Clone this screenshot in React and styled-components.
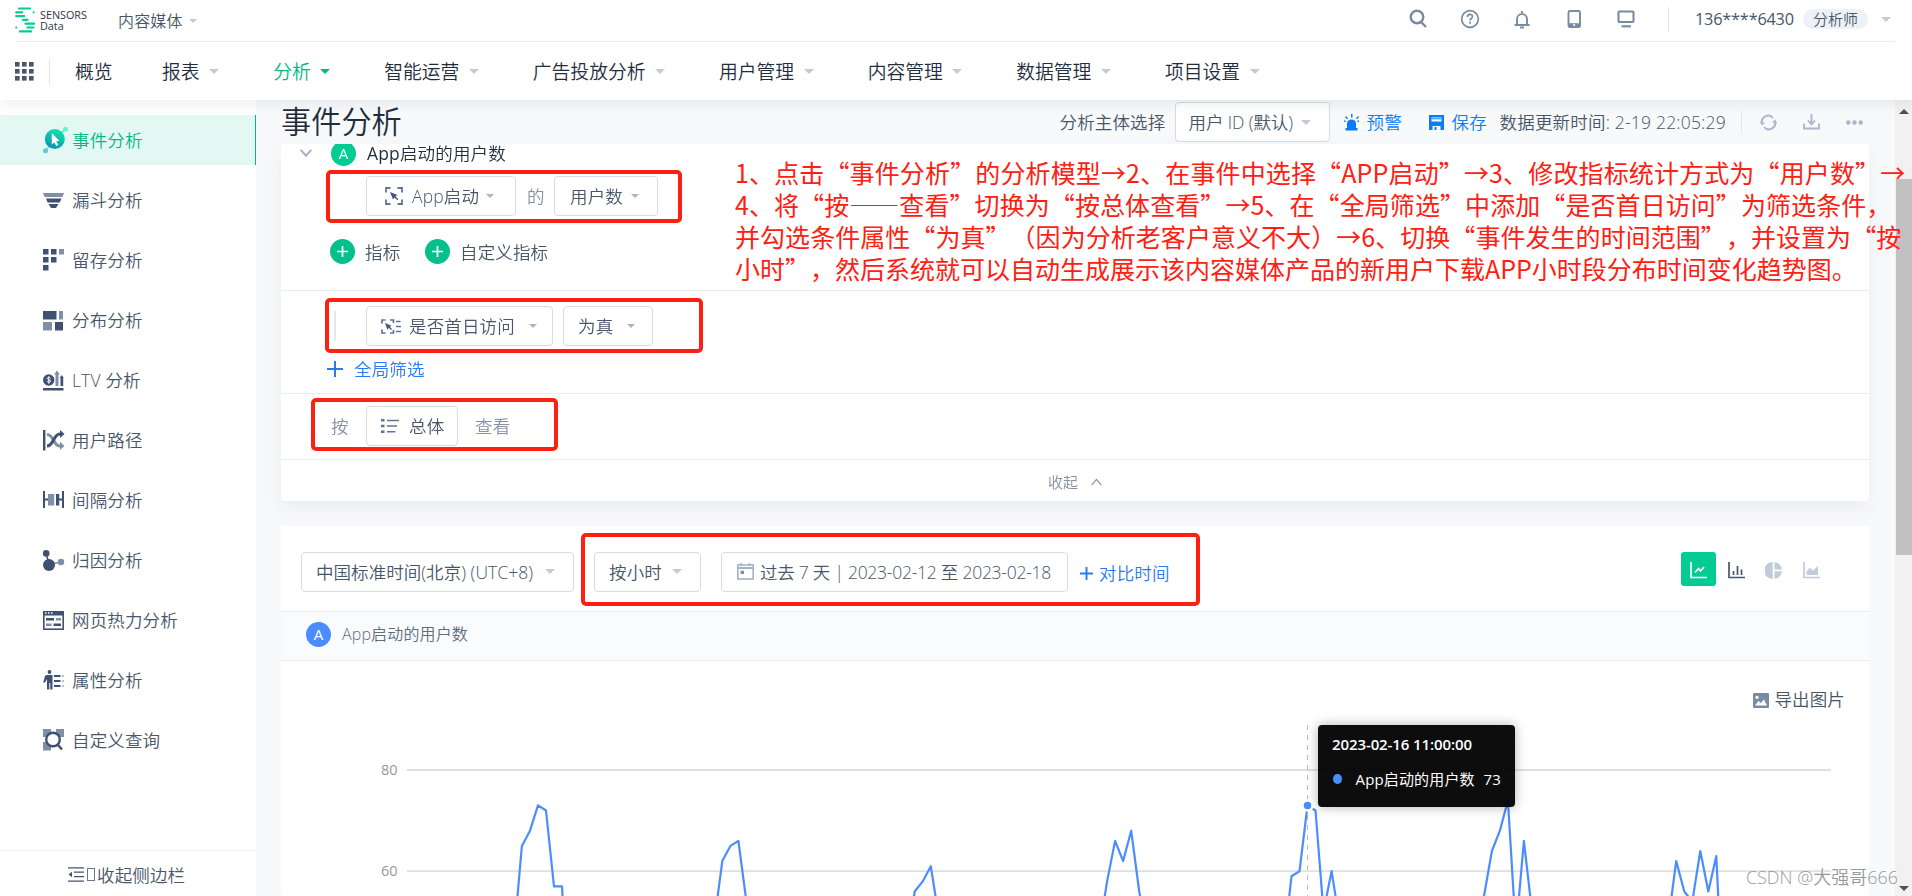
import React from "react";
import styled, { createGlobalStyle } from "styled-components";

const GlobalStyle = createGlobalStyle`
  * {
    box-sizing: border-box;
  }
  body {
    margin: 0;
    overflow: hidden;
    font-family: "Open Sans", "Noto Sans CJK SC", sans-serif;
    font-size: 17.5px;
    font-weight: 350;
    color: #475669;
  }
`;

const Page = styled.div`
  position: relative;
  width: 1912px;
  height: 896px;
  display: flex;
  flex-direction: column;
  overflow: hidden;
  background: #f7f9fb;
`;

/* ---------- header ---------- */

const Header = styled.header`
  position: relative;
  z-index: 2;
  flex: none;
  height: 100px;
  background: #fff;
  box-shadow: 0 2px 14px rgba(31, 45, 61, 0.1);
`;

const TopBar = styled.div`
  display: flex;
  align-items: center;
  height: 42px;
  margin: 0 17px 0 15px;
  border-bottom: 1px solid #e9eef4;
`;

const Logo = styled.div`
  display: flex;
  align-items: center;
  gap: 5px;
  width: 103px;
  height: 40px;
  padding-bottom: 1px;
  color: #2f3447;
  font-size: 10.8px;
  font-weight: 400;
  line-height: 11px;
`;

const Label = styled.span`
  flex: none;
  display: inline-block;
  width: ${({ $w }) => ($w ? `${$w}px` : "auto")};
  margin-left: ${({ $ml }) => $ml || 0}px;
  color: ${({ $color }) => $color || "inherit"};
  font-size: ${({ $size }) => $size || 17.5}px;
  font-weight: ${({ $weight }) => $weight || "inherit"};
  letter-spacing: ${({ $ls }) => $ls ?? 0.15}px;
  line-height: ${({ $lh }) => $lh || 24}px;
  white-space: nowrap;
`;

const Caret = styled.i`
  flex: none;
  width: 0;
  height: 0;
  margin-left: ${({ $ml }) => $ml || 0}px;
  border: ${({ $s }) => $s || 5}px solid transparent;
  border-top-color: ${({ $color }) => $color || "#c0ccda"};
  border-bottom: 0;
`;

const TopIcons = styled.div`
  display: flex;
  align-items: center;
  margin-left: auto;
  padding: 0 4px 3px 0;
  color: #778ca2;
  svg {
    display: block;
    margin-right: 32px;
  }
`;

const VLine = styled.i`
  flex: none;
  width: 1px;
  height: ${({ $h }) => $h}px;
  margin-left: ${({ $ml }) => $ml || 0}px;
  background: ${({ $color }) => $color || "#dfe5ed"};
`;

const RolePill = styled.span`
  width: 65px;
  height: 20px;
  margin-left: 10px;
  border-radius: 10px;
  background: #eef1f5;
  color: #475669;
  font-size: 15px;
  line-height: 20px;
  text-align: center;
`;

const Nav = styled.nav`
  display: flex;
  align-items: center;
  height: 58px;
  padding: 1px 0 0 15px;
  color: #1f2d3d;
`;

const NavItem = styled.div`
  display: flex;
  align-items: center;
  margin-left: ${({ $first }) => ($first ? 25 : 0)}px;
  margin-right: ${({ $first }) => ($first ? 49.5 : 54)}px;
  color: ${({ $active }) => ($active ? "#04b985" : "inherit")};
  font-size: 18.8px;
  line-height: 28px;
`;

/* ---------- sidebar ---------- */

const Body = styled.div`
  display: flex;
  flex: 1;
  min-height: 0;
`;

const Sidebar = styled.aside`
  display: flex;
  flex-direction: column;
  flex: none;
  width: 256px;
  padding-top: 15px;
  background: #fff;
`;

const SideItem = styled.div`
  display: flex;
  align-items: center;
  gap: 8px;
  height: 50px;
  margin-bottom: 10px;
  padding-left: 43px;
  border-right: 1px solid ${({ $active }) => ($active ? "#04b985" : "#fff")};
  background: ${({ $active }) => ($active ? "#e3f8f2" : "#fff")};
  color: ${({ $active }) => ($active ? "#04b985" : "#475669")};
  svg {
    flex: none;
    width: 21px;
    overflow: visible;
  }
`;

const SideFooter = styled.div`
  display: flex;
  align-items: center;
  height: 46px;
  margin-top: auto;
  padding: 2px 0 0 68px;
  border-top: 1px solid #e9f0f5;
`;

const MissingGlyph = styled.i`
  width: 8px;
  height: 13px;
  margin: 0 2px 0 3px;
  border: 1px solid #6b7889;
`;

/* ---------- main ---------- */

const Main = styled.main`
  display: flex;
  flex-direction: column;
  flex: none;
  width: 1588px;
  margin-left: 25px;
`;

const TitleBar = styled.div`
  display: flex;
  align-items: center;
  flex: none;
  height: 44px;
`;

const Title = styled.h1`
  margin: 0;
  color: #1f2d3d;
  font-size: 30.2px;
  font-weight: 350;
  line-height: 40px;
`;

const Tools = styled.div`
  display: flex;
  align-items: center;
  margin-left: auto;
  height: 42px;
  svg {
    flex: none;
  }
`;

const Panel = styled.section`
  flex: none;
  height: ${({ $h }) => $h}px;
  margin-bottom: 25px;
  overflow: hidden;
  border-radius: 0 0 4px 4px;
  background: #fff;
`;

const PanelShadow = styled.div`
  flex: none;
  height: 382px;
  filter: drop-shadow(0 8px 10px rgba(31, 45, 61, 0.06));
`;

const Row = styled.div`
  display: flex;
  align-items: center;
  height: ${({ $h }) => $h}px;
  padding-top: ${({ $pt }) => $pt || 0}px;
  padding-bottom: ${({ $pb }) => $pb || 0}px;
  padding-left: ${({ $pl }) => $pl || 0}px;
  border-bottom: ${({ $line }) => ($line ? "1px solid #e5edf5" : "0")};
  background: ${({ $tint }) => ($tint ? "#fafbfd" : "transparent")};
`;

const Select = styled.div`
  flex: none;
  display: flex;
  align-items: center;
  width: ${({ $w }) => $w}px;
  height: 40px;
  margin-left: ${({ $ml }) => $ml || 0}px;
  padding-left: ${({ $pl }) => $pl || 14}px;
  border: 1px solid #d3dce6;
  border-radius: 4px;
  background: #fff;
  svg {
    flex: none;
  }
`;

const Circle = styled.span`
  flex: none;
  display: flex;
  align-items: center;
  justify-content: center;
  width: 25px;
  height: 25px;
  margin-left: ${({ $ml }) => $ml || 0}px;
  border-radius: 50%;
  background: ${({ $color }) => $color};
  color: #fff;
  font-size: 15px;
  font-weight: 400;
  line-height: 18px;
`;

const Collapse = styled.div`
  display: flex;
  align-items: center;
  justify-content: center;
  gap: 13px;
  height: 41px;
  padding-top: 2px;
  color: #8492a6;
  font-size: 15px;
`;

const Compare = styled.div`
  display: flex;
  align-items: center;
  width: 102px;
  padding: 3px 0 0 12px;
  color: #2b7af5;
`;

const ChartTypes = styled.div`
  display: flex;
  align-items: center;
  margin-left: 511px;
  height: 40px;
`;

const ChartType = styled.span`
  display: flex;
  align-items: center;
  justify-content: center;
  width: 35px;
  height: 34px;
  margin-right: 2.6px;
  margin-bottom: 6px;
  padding-top: 4px;
  border-radius: 3px;
  background: ${({ $active }) => ($active ? "#04cb94" : "transparent")};
  color: ${({ $color }) => $color};
`;

const Export = styled.div`
  display: flex;
  align-items: center;
  justify-content: flex-end;
  gap: 5px;
  height: 64px;
  padding: 14px 24px 2px 0;
  svg {
    margin-top: 3px;
  }
`;

const ChartBox = styled.div`
  position: relative;
  height: 171px;
  svg {
    display: block;
  }
`;

const Tooltip = styled.div`
  position: absolute;
  left: 1037px;
  top: 0;
  width: 197px;
  height: 82px;
  padding: 7px 14px;
  border-radius: 4px;
  background: rgba(0, 0, 0, 0.95);
  box-shadow: 0 0 12px rgba(0, 0, 0, 0.3);
  color: #fff;
  font-size: 15px;
  font-weight: 400;
`;

const TooltipRow = styled.div`
  display: flex;
  align-items: center;
  margin-top: 11px;
`;

const Dot = styled.i`
  width: 10px;
  height: 10px;
  margin: 0 14px 0 1px;
  border-radius: 50%;
  background: #4b8dff;
`;

const Scrollbar = styled.div`
  display: flex;
  flex-direction: column;
  align-items: center;
  width: 17px;
  margin-left: auto;
  padding: 9px 0 5px 1px;
  background: #f1f1f1;
`;

const Thumb = styled.div`
  width: 16px;
  height: 376px;
  margin: 65px 0 auto;
  background: #c1c1c1;
`;

const ScrollArrow = styled.i`
  border: 5px solid transparent;
  border-${({ $up }) => ($up ? "bottom" : "top")}-color: #505050;
  border-${({ $up }) => ($up ? "top" : "bottom")}: 0;
`;

/* ---------- annotations over the page ---------- */

const Mark = styled.div`
  position: absolute;
  z-index: 3;
  left: ${({ $x }) => $x}px;
  top: ${({ $y }) => $y}px;
  width: ${({ $w }) => $w}px;
  height: ${({ $h }) => $h}px;
  border: 4px solid #ff2012;
  border-radius: 5px;
`;

const Note = styled.div`
  position: absolute;
  z-index: 3;
  left: 735px;
  top: 156px;
  color: #ff2012;
  font-family: "Noto Sans CJK SC", sans-serif;
  font-size: 25px;
  font-weight: 400;
  font-feature-settings: "chws" 0, "halt" 0;
  text-spacing-trim: space-all;
  line-height: 32px;
  white-space: nowrap;
`;

const NoteLine = styled.div`
  letter-spacing: ${({ $ls }) => $ls || 0}px;
`;

const Watermark = styled.div`
  position: absolute;
  z-index: 3;
  right: 14px;
  bottom: 6px;
  color: #96999d;
  font-size: 18px;
  line-height: 26px;
  text-shadow: 1px 1px 0 #fff;
`;

/* ---------- icons ---------- */

const DARK = "#3f5070";
const MID = "#7f8fa6";

const LogoMark = () => (
  <svg width="20" height="26" viewBox="0 0 20 26" stroke="#04cb94" strokeWidth="2.2" strokeLinecap="round">
    <path d="M4 1.5h11M1.2 5.3h6M18.6 5.3h0M1.2 9.1h8M8 12.9h4.5M10.5 16.7h8.5M12.5 20.5h6M1.3 20.5h0M5 24.4h11" />
  </svg>
);

const SearchIcon = () => (
  <svg width="20" height="20" viewBox="0 0 20 20" fill="none" stroke="currentColor" strokeWidth="2.4">
    <circle cx="9" cy="8" r="6.3" />
    <path d="M13 13l5 5" />
  </svg>
);

const HelpIcon = () => (
  <svg width="20" height="20" viewBox="0 0 20 20" fill="none" stroke="currentColor" strokeWidth="1.7">
    <circle cx="10" cy="10" r="8.3" />
    <path d="M7.500 8c0-3.600 5-3.400 5-.5 0 2-2.500 2-2.500 4" />
    <path d="M10 12.8v1.9" />
  </svg>
);

const BellIcon = () => (
  <svg width="20" height="20" viewBox="0 0 20 20" fill="none" stroke="currentColor" strokeWidth="1.9">
    <path d="M2.5 16h15M5 16V10c0-6.500 10-6.500 10 0v6M10 4V2" />
    <path d="M8 18.500h4" />
  </svg>
);

const PhoneIcon = () => (
  <svg width="20" height="20" viewBox="0 0 20 20" fill="none" stroke="currentColor" strokeWidth="1.9">
    <rect x="4.5" y="2" width="11.5" height="16" rx="1.5" />
    <path d="M4 16.2h12.5" strokeWidth="4" />
    <circle cx="10.2" cy="16" r="1" fill="#fff" stroke="none" />
  </svg>
);

const MonitorIcon = () => (
  <svg width="20" height="20" viewBox="0 0 20 20" fill="none" stroke="currentColor" strokeWidth="2.1">
    <rect x="2.5" y="2.5" width="15" height="10.5" rx="1" />
    <path d="M5.5 17.300h9.5" />
  </svg>
);

const GridIcon = () => (
  <svg width="19" height="19" viewBox="0 0 19 19" fill="#475669">
    {[0, 7, 14].map((y) =>
      [0, 7, 14].map((x) => <rect key={`${x}-${y}`} x={x} y={y} width="4.6" height="4.6" />)
    )}
  </svg>
);

const EventIcon = () => (
  <svg width="21" height="26" viewBox="0 0 21 26">
    <defs>
      <linearGradient id="ev" x1="0.7" y1="0" x2="0.3" y2="1">
        <stop offset="0" stopColor="#10e8a4" />
        <stop offset="1" stopColor="#0a8fb4" />
      </linearGradient>
    </defs>
    <path d="M3 23L22 2" stroke="#6bd9c8" strokeWidth="1.4" />
    <circle cx="22.5" cy="2.3" r="2.5" fill="#6ff0cb" />
    <circle cx="2.5" cy="23.8" r="2.5" fill="#5ec9ce" />
    <circle cx="11.8" cy="12" r="10" fill="url(#ev)" />
    <path d="M8.800 6l7.700 8-3.200.3 2 3.700-2 1-2-3.600-2.500 2z" fill="#fff" />
  </svg>
);

const FunnelIcon = () => (
  <svg width="21" height="15" viewBox="0 0 21 15">
    <path d="M0 0h21l-1.500 4h-18z" fill={MID} />
    <path d="M3 5.500h15.500l-1.700 4H4.600z" fill={DARK} />
    <path d="M5.500 11h10l-2.500 4H8z" fill={DARK} />
  </svg>
);

const RetentionIcon = () => (
  <svg width="21" height="22" viewBox="0 0 21 22" fill={DARK}>
    <path d="M0 0h5.500v5.500H0zM8 0h5.500v5.500H8zM0 8h5.500v5.500H0zM8 8h5.500v5.500H8zM0 16h5.500v5.500H0z" />
    <path d="M16 0h5v5.500h-5z" fill={MID} />
  </svg>
);

const DistributionIcon = () => (
  <svg width="21" height="21" viewBox="0 0 21 21">
    <path d="M0 1h13.500v8.500H0zM12 12h8v8.500h-8z" fill={DARK} />
    <path d="M16 1h4v8.500h-4zM0 12h9v8.500H0z" fill={MID} />
  </svg>
);

const LtvIcon = () => (
  <svg width="21" height="21" viewBox="0 0 21 21">
    <circle cx="5.7" cy="10" r="5.7" fill={DARK} />
    <path d="M7.500 8.200c-.6-1.200-3.300-1-3.300.3s3.400 1 3.400 2.500-2.900 1.500-3.500.2M5.800 6.300v7.400" stroke="#fff" strokeWidth="1" fill="none" />
    <path d="M12.500 16V4.500h-1.300L14 .5l2.800 4h-1.300V16z" fill={MID} />
    <path d="M17.500 16V8h-.8l2-3 2 3h-.5v8zM0 18h20.500v2.500H0z" fill={DARK} />
  </svg>
);

const PathIcon = () => (
  <svg width="21" height="21" viewBox="0 0 21 21" fill="none" strokeWidth="3">
    <path d="M1.200 0v20.500" stroke={DARK} strokeWidth="2.4" />
    <path d="M4 4.500c7 0 6 11.500 13 11.500" stroke={MID} />
    <path d="M17 11.800l4.500 4.200-4.500 4z" fill={MID} />
    <path d="M4 16C11 16 10 4 17 4" stroke={DARK} />
    <path d="M17 0l4.500 4-4.500 4z" fill={DARK} />
  </svg>
);

const IntervalIcon = () => (
  <svg width="21" height="18" viewBox="0 0 21 18">
    <path d="M0 0h2v17H0zM19 0h2v17h-2zM2 7.500h3v2H2zM16 7.500h3v2h-3zM13 3h3.200v11.500H13z" fill={DARK} />
    <path d="M5 3h6.200v11.500H5z" fill={MID} />
  </svg>
);

const AttributionIcon = () => (
  <svg width="21" height="21" viewBox="0 0 21 21">
    <path d="M3 3l3 11" stroke={DARK} strokeWidth="1.5" />
    <path d="M6 14.500l12-2.500" stroke={MID} strokeWidth="1.5" />
    <circle cx="3.2" cy="3.4" r="3.3" fill={DARK} />
    <circle cx="6" cy="15" r="6" fill={DARK} />
    <circle cx="18" cy="12" r="3.2" fill={MID} />
  </svg>
);

const HeatmapIcon = () => (
  <svg width="21" height="19" viewBox="0 0 21 19">
    <rect x=".8" y=".8" width="19.4" height="17.4" fill="#fff" stroke={DARK} strokeWidth="1.6" />
    <path d="M0 0h21v4.500H0zM3 7h8v2.500H3zM10.500 12.500h7.500V15h-7.500z" fill={DARK} />
    <path d="M13 7h5v2.500h-5zM3 12.500h5.500V15H3z" fill={MID} />
    <path d="M2 2h1.500M5 2h1.500M8 2h1.500" stroke="#fff" strokeWidth="1.3" />
  </svg>
);

const PropertyIcon = () => (
  <svg width="21" height="20" viewBox="0 0 21 20">
    <circle cx="6.5" cy="2" r="1.9" fill={DARK} />
    <path d="M3.500 5h6v14.500H7.300V13h-1v6.500H4V9L2 12.500H.2L2 6zM11 5h6.500v2H11zM11 10h6.500v2H11zM11 15h6.500v2H11z" fill={DARK} />
    <path d="M19 5h2v2h-2zM19 10h2v2h-2zM19 15h2v2h-2z" fill="#b8c2d0" />
  </svg>
);

const QueryIcon = () => (
  <svg width="21" height="22" viewBox="0 0 21 22">
    <path d="M0 0h8v8H0zM13 0h8v8h-8zM0 13h8v8.500H0z" fill={MID} />
    <circle cx="10" cy="10.5" r="6.8" fill="#fff" stroke={DARK} strokeWidth="2.4" />
    <path d="M14.500 15.500l4.500 5" stroke={DARK} strokeWidth="2.6" />
  </svg>
);

const FoldIcon = () => (
  <svg width="16" height="15" viewBox="0 0 16 15" stroke="#475669" strokeWidth="1.3">
    <path d="M0 .8h16M6 5.200h10M6 9.700h10M0 14.200h16" />
    <path d="M4 4.700v5.600L.6 7.500z" fill="#475669" stroke="none" />
  </svg>
);

const AlarmIcon = () => (
  <svg width="16" height="17" viewBox="0 0 16 17" fill="#0a7cf7">
    <path d="M3 14V9.500C3 4 12 4 12 9.500V14h1.500v2.500h-12V14zM7 0h1.500v3.500H7zM1 3l1-1 2 2.200-1 1zM12 4.200L14 2l1 1-2 2.200zM0 6.500h1.500V8H0zM13.500 6.500H15V8h-1.500z" />
  </svg>
);

const SaveIcon = () => (
  <svg width="17" height="17" viewBox="0 0 17 17">
    <path d="M1 1h15v15h-3.500v-4h-8v4H1z" fill="#0a7cf7" />
    <path d="M3.500 3.500h10v4h-10z" fill="#fff" />
    <path d="M3.500 4.800h10" stroke="#0a7cf7" strokeWidth="1" />
    <path d="M6.500 13h2v3h-2z" fill="#0a7cf7" />
  </svg>
);

const RefreshIcon = () => (
  <svg width="17" height="17" viewBox="0 0 17 17" fill="none" stroke="#a9b5c8" strokeWidth="1.9">
    <path d="M2 9.500A6.300 6.300 0 0 1 13 4M15 7.500A6.300 6.300 0 0 1 4 13" />
    <path d="M.5 7.500l1.500 3 2.500-2M16.500 9.500l-1.500-3-2.500 2" strokeWidth="1.2" />
  </svg>
);

const DownloadIcon = () => (
  <svg width="17" height="16" viewBox="0 0 17 16" fill="none" stroke="#a9b5c8" strokeWidth="1.8">
    <path d="M1 9.500v5h15v-5M8.500 0v10M5 6.500l3.500 4 3.500-4" />
  </svg>
);

const MoreIcon = () => (
  <svg width="17" height="5" viewBox="0 0 17 5" fill="#a9b5c8">
    <circle cx="2.3" cy="2.5" r="2.2" />
    <circle cx="8.5" cy="2.5" r="2.2" />
    <circle cx="14.7" cy="2.5" r="2.2" />
  </svg>
);

const CursorIcon = () => (
  <svg width="18" height="18" viewBox="0 0 18 18" fill="none" stroke="#5f7396" strokeWidth="1.8">
    <path d="M1 5.500V1h4.500M12.500 1H17v4.500M17 12.500V17h-4.500M5.500 17H1v-4.500" />
    <path d="M5 5l7.500 3-2 1.200 2.800 3-1 1-2.800-2.800L8 12.500z" fill="#3f5883" stroke="none" />
  </svg>
);

const CursorListIcon = () => (
  <svg width="20" height="15" viewBox="0 0 20 15" fill="none" stroke="#5f7396" strokeWidth="1.7">
    <path d="M1 4.500V1h3.500M9 1h3.500v3M12.500 11v3H9M4.500 14H1v-3.500M15 2.500h4.500M15 7.500h5M15 12.500h5" />
    <path d="M4 4l6.500 2.700-1.700 1L11 10l-1 1-2.200-2.200L6.500 11z" fill="#3f5883" stroke="none" />
  </svg>
);

const ListIcon = () => (
  <svg width="18" height="14" viewBox="0 0 18 14" stroke="#5f7396" strokeWidth="2">
    <path d="M0 1.300h3.500M0 7h3.500M0 12.700h3.500" strokeWidth="2.6" />
    <path d="M6 1.500h12M6 7h10M6 12.800h8.500" strokeWidth="1.6" />
  </svg>
);

const CalendarIcon = () => (
  <svg width="17" height="17" viewBox="0 0 17 17" fill="none" stroke="#a3b1c6" strokeWidth="1.6">
    <rect x=".8" y="2" width="15.4" height="14" />
    <path d="M1 5h15M4 .3v2M12.500 .3v2" strokeWidth="2" />
    <path d="M3.500 7.700h3.500v3.300H3.500z" fill="#7f8fa6" stroke="none" />
  </svg>
);

const PlusIcon = ({ size, color, width }) => (
  <svg width={size} height={size} viewBox="0 0 16 16" stroke={color} strokeWidth={width}>
    <path d="M0 8h16M8 0v16" />
  </svg>
);

const Chevron = ({ w, h, up, color, width }) => (
  <svg width={w} height={h} viewBox="0 0 12 8" fill="none" stroke={color} strokeWidth={width}>
    <path d={up ? "M.7 7.300L6 1.200l5.300 6.100" : "M.7 .8L6 6.700 11.300 .8"} />
  </svg>
);

const AxesFrame = ({ children }) => (
  <svg width="17" height="17" viewBox="0 0 17 17" fill="none" stroke="currentColor" strokeWidth="1.7">
    <path d="M1 0v15.500h16" />
    {children}
  </svg>
);

const PieIcon = () => (
  <svg width="17" height="17" viewBox="0 0 17 17" fill="currentColor">
    <path d="M7.700 0v17A8.500 8.500 0 0 1 7.700 0zM9.500 0A8.300 8.300 0 0 1 17 7.500H9.500zM9.500 9.300H17A8.300 8.300 0 0 1 9.500 17z" />
  </svg>
);

const ImageIcon = () => (
  <svg width="16" height="15" viewBox="0 0 16 15">
    <rect width="16" height="15" rx="1" fill="#778ca2" />
    <circle cx="4" cy="4.3" r="1.6" fill="#fff" />
    <path d="M2 12.500l3.500-4.800 2 2.500L11 6.500l3 6z" fill="#fff" />
  </svg>
);

/* ---------- data ---------- */

const navItems = ["报表", "分析", "智能运营", "广告投放分析", "用户管理", "内容管理", "数据管理", "项目设置"];

const sideItems = [
  { name: "事件分析", icon: EventIcon, active: true },
  { name: "漏斗分析", icon: FunnelIcon },
  { name: "留存分析", icon: RetentionIcon },
  { name: "分布分析", icon: DistributionIcon },
  { name: "LTV 分析", icon: LtvIcon },
  { name: "用户路径", icon: PathIcon },
  { name: "间隔分析", icon: IntervalIcon },
  { name: "归因分析", icon: AttributionIcon },
  { name: "网页热力分析", icon: HeatmapIcon },
  { name: "属性分析", icon: PropertyIcon },
  { name: "自定义查询", icon: QueryIcon },
];

// hour offset from 2023-02-12 00:00 -> number of users
const series = [
  [8, 47], [9, 65], [10, 68], [11, 73], [12, 72], [13, 57], [14, 57], [15, 30],
  [33, 50], [34, 62], [35, 65], [36, 66], [37, 54], [38, 20],
  [57, 45], [58, 56], [59, 58], [60, 61], [61, 51], [62, 20],
  [81, 48], [82, 58], [83, 66], [84, 62], [85, 68], [86, 56], [87, 48],
  [104, 45], [105, 59], [106, 60], [107, 73], [108, 72], [109, 52], [110, 60], [111, 50], [112, 20],
  [129, 55], [130, 64], [131, 68], [132, 74], [133, 48], [134, 66], [135, 52], [136, 20],
  [152, 50], [153, 62], [154, 56], [155, 54], [156, 64], [157, 56], [158, 63], [159, 30],
];

const xOf = (hour) => 168.8 + hour * 8.016;
const yOf = (users) => 45 + (80 - users) * 5.062;
const linePath = series.map(([h, v]) => `${xOf(h).toFixed(1)},${yOf(v).toFixed(1)}`).join(" ");

const noteLines = [
  { text: "1、点击“事件分析”的分析模型→2、在事件中选择“APP启动”→3、修改指标统计方式为“用户数”→", ls: 0.14 },
  { text: "4、将“按——查看”切换为“按总体查看”→5、在“全局筛选”中添加“是否首日访问”为筛选条件，", ls: 0.08 },
  { text: "并勾选条件属性“为真”（因为分析老客户意义不大）→6、切换“事件发生的时间范围”，并设置为“按", ls: 0.05 },
  { text: "小时”，然后系统就可以自动生成展示该内容媒体产品的新用户下载APP小时段分布时间变化趋势图。" },
];

const PageHeader = () => (
  <Header>
    <TopBar>
      <Logo>
        <LogoMark />
        <div>
          SENSORS
          <br />
          Data
        </div>
      </Logo>
      <Label $size={16}>内容媒体</Label>
      <Caret $ml={6} $s={4.5} />
      <TopIcons>
        <SearchIcon />
        <HelpIcon />
        <BellIcon />
        <PhoneIcon />
        <MonitorIcon />
        <VLine $h={25} />
        <Label $ml={26} $w={98} $size={16.3} $weight={400} $ls={-0.2} $color="#475669">
          136****6430
        </Label>
        <RolePill>分析师</RolePill>
        <Caret $ml={13} />
      </TopIcons>
    </TopBar>
    <Nav>
      <GridIcon />
      <VLine $h={26} $ml={15} />
      <NavItem $first>概览</NavItem>
      {navItems.map((item) => (
        <NavItem key={item} $active={item === "分析"}>
          {item}
          <Caret $ml={9.5} $color={item === "分析" ? "#04b985" : null} />
        </NavItem>
      ))}
    </Nav>
  </Header>
);

const SideMenu = () => (
  <Sidebar>
    {sideItems.map(({ name, icon: Icon, active }) => (
      <SideItem key={name} $active={active}>
        <Icon />
        <Label>{name}</Label>
      </SideItem>
    ))}
    <SideFooter>
      <FoldIcon />
      <MissingGlyph />
      <Label>收起侧边栏</Label>
    </SideFooter>
  </Sidebar>
);

const TrendChart = () => (
  <ChartBox>
    <svg width="1588" height="171" viewBox="0 0 1588 171">
      <path d="M126 45h1424M126 146.200h1424" stroke="#e0e0e0" strokeWidth="1.8" />
      <g fill="#999" fontSize="14.5" fontWeight="400" textAnchor="end">
        <text x="116.5" y="50">80</text>
        <text x="116.5" y="151">60</text>
      </g>
      <path d="M1026.500 0v171" stroke="#bbb" strokeDasharray="5 5" />
      <polyline points={linePath} fill="none" stroke="#4b8dff" strokeWidth="2.2" strokeLinejoin="round" />
      <circle cx={xOf(107)} cy={yOf(73)} r="5" fill="#4b8dff" stroke="#fff" strokeWidth="2.5" />
    </svg>
    <Tooltip>
      <Label $size={15} $weight={600} $ls={-0.1}>
        2023-02-16 11:00:00
      </Label>
      <TooltipRow>
        <Dot />
        <Label $size={15} $w={128}>
          App启动的用户数
        </Label>
        <Label $size={15}>73</Label>
      </TooltipRow>
    </Tooltip>
  </ChartBox>
);

const App = () => (
  <Page>
    <GlobalStyle />
    <PageHeader />
    <Body>
      <SideMenu />
      <Main>
        <TitleBar>
          <Title>事件分析</Title>
          <Tools>
            <Label $w={115}>分析主体选择</Label>
            <Select $w={155} $pl={13}>
              <Label $w={112} $ls={-0.1}>
                用户 ID (默认)
              </Label>
              <Caret />
            </Select>
            <Label $w={14} />
            <AlarmIcon />
            <Label $ml={7} $w={61} $color="#0a7cf7">
              预警
            </Label>
            <SaveIcon />
            <Label $ml={7} $w={48} $color="#0a7cf7">
              保存
            </Label>
            <Label $w={241} $ls={0.2}>
              数据更新时间: 2-19 22:05:29
            </Label>
            <VLine $h={23} />
            <Label $w={18} />
            <RefreshIcon />
            <Label $w={26} />
            <DownloadIcon />
            <Label $w={26} />
            <MoreIcon />
            <Label $w={6.5} />
          </Tools>
        </TitleBar>

        <PanelShadow>
          <Panel $h={357}>
            <Row $h={18} $pl={19}>
              <Chevron w={12} h={8} color="#a3b1c6" width={2} />
              <Circle $ml={19} $color="#04cb94">
                A
              </Circle>
              <Label $ml={11} $lh={18} $color="#1f2d3d">
                <Label $weight={500} $lh={18}>
                  App
                </Label>
                启动的用户数
              </Label>
            </Row>
            <Row $h={66} $pl={85} $pt={1}>
              <Select $w={150} $pl={18}>
                <CursorIcon />
                <Label $ml={9} $w={74}>
                  App启动
                </Label>
                <Caret $s={4} $color="#a9b5c8" />
              </Select>
              <Label $ml={11} $w={27} $color="#8492a6">
                的
              </Label>
              <Select $w={104} $pl={15}>
                <Label $w={61}>用户数</Label>
                <Caret $s={4} $color="#a9b5c8" />
              </Select>
            </Row>
            <Row $h={63} $pl={49} $pb={15} $line>
              <Circle $color="#04c08c">
                <PlusIcon size={11} color="#fff" width={2.5} />
              </Circle>
              <Label $ml={10} $w={60}>
                指标
              </Label>
              <Circle $color="#04c08c">
                <PlusIcon size={11} color="#fff" width={2.5} />
              </Circle>
              <Label $ml={10}>自定义指标</Label>
            </Row>
            <Row $h={70} $pl={53}>
              <VLine $h={30} $color="#e0eaf5" />
              <VLine $h={30} $color="#e0eaf5" />
              <Select $ml={30} $w={187} $pl={14}>
                <CursorListIcon />
                <Label $ml={8} $w={120}>
                  是否首日访问
                </Label>
                <Caret $s={4} $color="#a9b5c8" />
              </Select>
              <Select $ml={10} $w={90}>
                <Label $w={49}>为真</Label>
                <Caret $s={4} $color="#a9b5c8" />
              </Select>
            </Row>
            <Row $h={33} $pl={46} $pb={16} $line>
              <PlusIcon size={16} color="#2b7af5" width={2} />
              <Label $ml={11} $color="#2b7af5">
                全局筛选
              </Label>
            </Row>
            <Row $h={66} $pl={50} $pb={2} $line>
              <Label $w={35} $color="#8492a6">
                按
              </Label>
              <Select $w={92} $pl={14}>
                <ListIcon />
                <Label $ml={10}>总体</Label>
              </Select>
              <Label $ml={17} $color="#8492a6">
                查看
              </Label>
            </Row>
            <Collapse>
              <span>收起</span>
              <Chevron w={11} h={8} up color="#8492a6" width={1.3} />
            </Collapse>
          </Panel>
        </PanelShadow>

        <Panel $h={370}>
          <Row $h={86} $pl={20} $pt={6} $line>
            <Select $w={273}>
              <Label $w={229} $ls={0.05}>
                中国标准时间(北京) (UTC+8)
              </Label>
              <Caret />
            </Select>
            <Select $ml={20} $w={107}>
              <Label $w={63}>按小时</Label>
              <Caret />
            </Select>
            <Select $ml={20} $w={347} $pl={15}>
              <CalendarIcon />
              <Label $ml={6} $ls={-0.25}>
                过去 7 天 | 2023-02-12 至 2023-02-18
              </Label>
            </Select>
            <Compare>
              <PlusIcon size={13} color="#2b7af5" width={2.4} />
              <Label $ml={6}>对比时间</Label>
            </Compare>
            <ChartTypes>
              <ChartType $active $color="#fff">
                <AxesFrame>
                  <path d="M5 10.500l3.500-4 2 2.500L14 5" />
                </AxesFrame>
              </ChartType>
              <ChartType $color="#475669">
                <AxesFrame>
                  <path d="M5.500 13V9M9.500 13V4M13.500 13V7.500" />
                </AxesFrame>
              </ChartType>
              <ChartType $color="#c0ccda">
                <PieIcon />
              </ChartType>
              <ChartType $color="#c0ccda">
                <AxesFrame>
                  <path d="M3.500 13V9.500l3.500-4 3 3L15 4v9z" fill="currentColor" stroke="none" />
                </AxesFrame>
              </ChartType>
            </ChartTypes>
          </Row>
          <Row $h={49} $pl={25} $pb={4} $tint $line>
            <Circle $color="#4b8dff">A</Circle>
            <Label $ml={11} $size={16} $color="#5f6d80">
              App启动的用户数
            </Label>
          </Row>
          <Export>
            <ImageIcon />
            <Label>导出图片</Label>
          </Export>
          <TrendChart />
        </Panel>
      </Main>
      <Scrollbar>
        <ScrollArrow $up />
        <Thumb />
        <ScrollArrow />
      </Scrollbar>
    </Body>

    <Mark $x={326} $y={170} $w={356} $h={53} />
    <Mark $x={325} $y={298} $w={378} $h={55} />
    <Mark $x={311} $y={398} $w={247} $h={53} />
    <Mark $x={581} $y={533} $w={619} $h={73} />
    <Note lang="zh-CN">
      {noteLines.map(({ text, ls }) => (
        <NoteLine key={text} $ls={ls}>
          {text}
        </NoteLine>
      ))}
    </Note>
    <Watermark>CSDN @大强哥666</Watermark>
  </Page>
);

export default App;
